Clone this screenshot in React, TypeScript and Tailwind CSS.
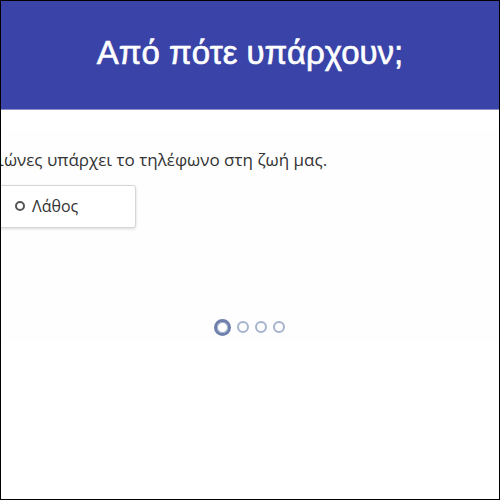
export default function App() {
  return (
    <div className="w-[500px] h-[500px] overflow-hidden border border-black bg-white flex flex-col" style={{ fontFamily: '"Liberation Sans", Arial, sans-serif' }}>
      <div className="h-[109px] bg-[#3a44a8] flex items-center justify-center shrink-0 border-b border-[#8a90c8]">
        <h1 className="text-white text-[33px] font-normal [-webkit-text-stroke:0.6px_white] tracking-[0px] mt-[-4px]">Από πότε υπάρχουν;</h1>
      </div>
      <div className="h-[20px]" />
      <div className="bg-[#fefefe] h-[212px] overflow-hidden">
        <p className="mt-[17px] ml-[-80px] whitespace-nowrap text-[17px] text-[#333]" style={{ fontFamily: '"Open Sans", sans-serif' }}>
          Εδώ και αιώνες υπάρχει το τηλέφωνο στη ζωή μας.
        </p>
        <div className="mt-[12px] ml-[-10px] w-[145px] h-[43px] border border-[#d6d6d6] rounded-[3px] bg-white shadow-[0_1px_3px_rgba(0,0,0,0.15)] flex items-center pl-[23px] gap-[7px]">
          <span className="w-[10px] h-[10px] rounded-full border-[2px] border-[#555]" />
          <span className="text-[16px] text-[#333]" style={{ fontFamily: '"Open Sans", sans-serif' }}>Λάθος</span>
        </div>
        <div className="mt-[91px] flex items-center justify-center gap-[6px] pr-[2px]">
          <span className="w-[17px] h-[17px] rounded-full border-[3px] border-[#6d80ab] bg-white ring-1 ring-[#a8b4cf] ring-inset" />
          <span className="w-[12px] h-[12px] rounded-full border-[2px] border-[#a6b3cd]" />
          <span className="w-[12px] h-[12px] rounded-full border-[2px] border-[#a6b3cd]" />
          <span className="w-[12px] h-[12px] rounded-full border-[2px] border-[#a6b3cd]" />
        </div>
      </div>
    </div>
  );
}
